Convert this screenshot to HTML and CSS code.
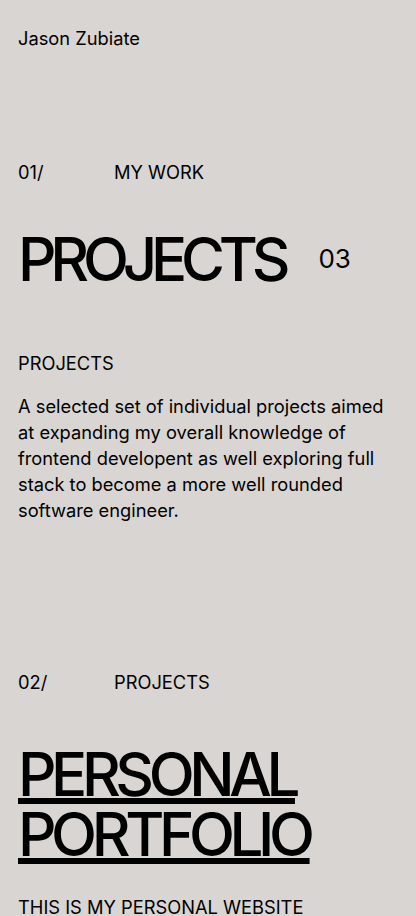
FILE: index.html
```html
<!DOCTYPE html>
<html lang="en">
<head>
<meta charset="utf-8">
<title>Jason Zubiate</title>
<link rel="stylesheet" href="styles.css">
</head>
<body>
<header class="site-header">
  <span class="name">Jason Zubiate</span>
</header>
<main class="content">
  <section class="intro">
    <div class="label-row">
      <span class="num">01/</span>
      <span class="label">MY WORK</span>
    </div>
    <div class="title-row">
      <h1 class="big-title">PROJECTS</h1>
      <span class="count">03</span>
    </div>
    <h2 class="small-title">PROJECTS</h2>
    <p class="desc">A selected set of individual projects aimed at expanding my overall knowledge of frontend developent as well exploring full stack to become a more well rounded software engineer.</p>
  </section>
  <section class="project">
    <div class="label-row">
      <span class="num">02/</span>
      <span class="label">PROJECTS</span>
    </div>
    <h2 class="project-title"><a href="#" class="project-link">PERSONAL PORTFOLIO</a></h2>
    <p class="project-sub">THIS IS MY PERSONAL WEBSITE</p>
  </section>
</main>
</body>
</html>
```
FILE: styles.css
```css
* { box-sizing: border-box; }
html, body { margin: 0; padding: 0; }
body {
  background: #d8d5d2;
  color: #000;
  font-family: Inter, "Noto Sans", sans-serif;
  font-size: 18.3px;
  line-height: 22px;
  overflow: hidden;
}
.site-header {
  padding: 27px 18px 0;
}
.name { display: block; }
.content {
  padding: 0 18px;
}
.intro {
  display: flex;
  flex-direction: column;
  padding-top: 112px;
}
.label-row {
  display: flex;
}
.num { width: 96px; }
.title-row {
  display: flex;
  align-items: center;
  gap: 34px;
  margin-top: 46px;
}
.big-title {
  margin: 0;
  font-size: 60px;
  line-height: 60px;
  font-weight: 500;
  letter-spacing: -6.2px;
}
.count {
  font-size: 26px;
  line-height: 26px;
}
.small-title {
  margin: 63px 0 0;
  font-size: 18.3px;
  font-weight: 400;
  line-height: 22px;
}
.desc {
  margin: 19px 0 0;
  line-height: 26px;
}
.project {
  padding-top: 148px;
}
.project-title {
  margin: 51px 0 0;
  font-size: 60px;
  line-height: 60px;
  font-weight: 500;
  letter-spacing: -5.4px;
}
.project-link {
  color: #000;
  text-decoration: underline;
  text-decoration-thickness: 6px;
  text-underline-offset: 2px;
}
.project-sub {
  margin: 32px 0 0;
}
```
